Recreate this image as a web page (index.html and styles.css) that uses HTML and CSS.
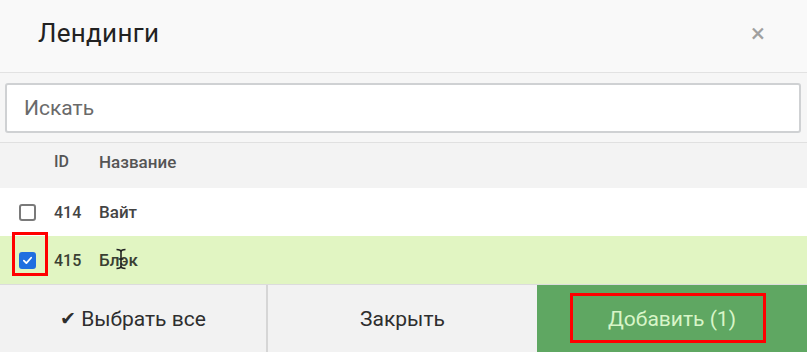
FILE: index.html
```html
<!DOCTYPE html>
<html lang="ru">
<head>
<meta charset="utf-8">
<link rel="stylesheet" href="styles.css">
</head>
<body>
<div class="modal">
  <div class="header">
    <div class="title">Лендинги</div>
    <div class="close">×</div>
  </div>
  <div class="search">
    <div class="input">Искать</div>
  </div>
  <div class="row head">
    <div class="cell-check"></div>
    <div class="cell-id">ID</div>
    <div class="cell-name">Название</div>
  </div>
  <div class="row">
    <div class="cell-check"><span class="box"></span></div>
    <div class="cell-id">414</div>
    <div class="cell-name">Вайт</div>
  </div>
  <div class="row selected">
    <div class="cell-check">
      <span class="box checked">
        <svg viewBox="0 0 16 16" width="16" height="16"><path d="M3.5 8.2 L6.6 11.2 L12.5 4.6" fill="none" stroke="#fff" stroke-width="2.2" stroke-linecap="round" stroke-linejoin="round"/></svg>
      </span>
      <span class="mark mark-check"></span>
    </div>
    <div class="cell-id">415</div>
    <div class="cell-name name-cursor">Блэк
      <svg class="ibeam" viewBox="0 0 12 22" width="12" height="22"><path d="M1.5 1.5 Q6 1.5 6 4 Q6 1.5 10.5 1.5 M6 4 V18 M1.5 20.5 Q6 20.5 6 18 Q6 20.5 10.5 20.5 M3.5 11 H8.5" fill="none" stroke="#222" stroke-width="1.6"/></svg>
    </div>
  </div>
  <div class="footer">
    <div class="btn btn-all"><span class="tick">✔</span>Выбрать все</div>
    <div class="btn btn-close">Закрыть</div>
    <div class="btn btn-add">Добавить (1)<span class="mark mark-add"></span></div>
  </div>
</div>
</body>
</html>
```

FILE: styles.css
```css
* { box-sizing: border-box; }
html, body { margin: 0; padding: 0; }
body {
  width: 807px;
  height: 352px;
  overflow: hidden;
  font-family: Roboto, "Liberation Sans", sans-serif;
  background: #fff;
}
.modal {
  width: 807px;
  height: 352px;
  display: flex;
  flex-direction: column;
}
.header {
  height: 73px;
  flex: none;
  background: #f9f9f9;
  border-bottom: 1px solid #e2e2e2;
  display: flex;
  align-items: center;
  justify-content: space-between;
  padding: 0 42px 0 38px;
}
.title {
  font-size: 26px;
  color: #222;
  letter-spacing: 0.3px;
  margin-top: -6px;
}
.close {
  font-size: 26px;
  color: #a0a0a0;
  margin-top: -6px;
}
.search {
  flex: none;
  height: 70px;
  background: #f6f6f6;
  border-bottom: 1px solid #e0e0e0;
  padding: 10px 6px 0 5px;
}
.input {
  height: 50px;
  background: #fff;
  border: 2px solid #cfd1d3;
  border-radius: 3px;
  display: flex;
  align-items: center;
  padding-left: 17px;
  font-size: 21px;
  color: #6a6a6a;
}
.row {
  flex: none;
  height: 48px;
  display: flex;
  align-items: center;
  background: #fff;
  font-size: 16px;
  font-weight: 500;
  color: #444;
  position: relative;
}
.row.head {
  height: 45px;
  background: #f3f3f3;
  color: #555;
  padding-bottom: 8px;
}
.row.selected {
  background: #e1f5c2;
  color: #3a3f33;
}
.cell-check {
  width: 54px;
  flex: none;
  padding-left: 19px;
  display: flex;
  align-items: center;
}
.cell-id { width: 45px; flex: none; }
.cell-name { flex: 1; font-size: 17px; }
.box {
  width: 17px;
  height: 17px;
  border: 2px solid #7a7a7a;
  border-radius: 3px;
  background: #fff;
  display: flex;
  align-items: center;
  justify-content: center;
}
.box.checked {
  background: #1f6fe0;
  border-color: #1f6fe0;
}
.box.checked svg { width: 13px; height: 13px; }
.mark {
  position: absolute;
  border: 3px solid #f00;
}
.mark-check {
  left: 12px;
  top: -4px;
  width: 36px;
  height: 44px;
}
.name-cursor { position: relative; }
.ibeam {
  position: absolute;
  left: 16px;
  top: -2px;
}
.footer {
  flex: 1;
  display: flex;
  border-top: 1px solid #dcdcdc;
}
.btn {
  display: flex;
  align-items: center;
  justify-content: center;
  font-size: 21px;
  color: #2e2e2e;
  background: #f2f2f2;
  position: relative;
}
.tick { font-size: 19px; margin-right: 5px; }
.btn-all { width: 268px; border-right: 2px solid #d6d6d6; }
.btn-close { width: 269px; }
.btn-add {
  flex: 1;
  background: #5fa762;
  color: #d8f5c8;
}
.mark-add {
  left: 33px;
  top: 8px;
  width: 196px;
  height: 50px;
  border-width: 3px;
}
```
